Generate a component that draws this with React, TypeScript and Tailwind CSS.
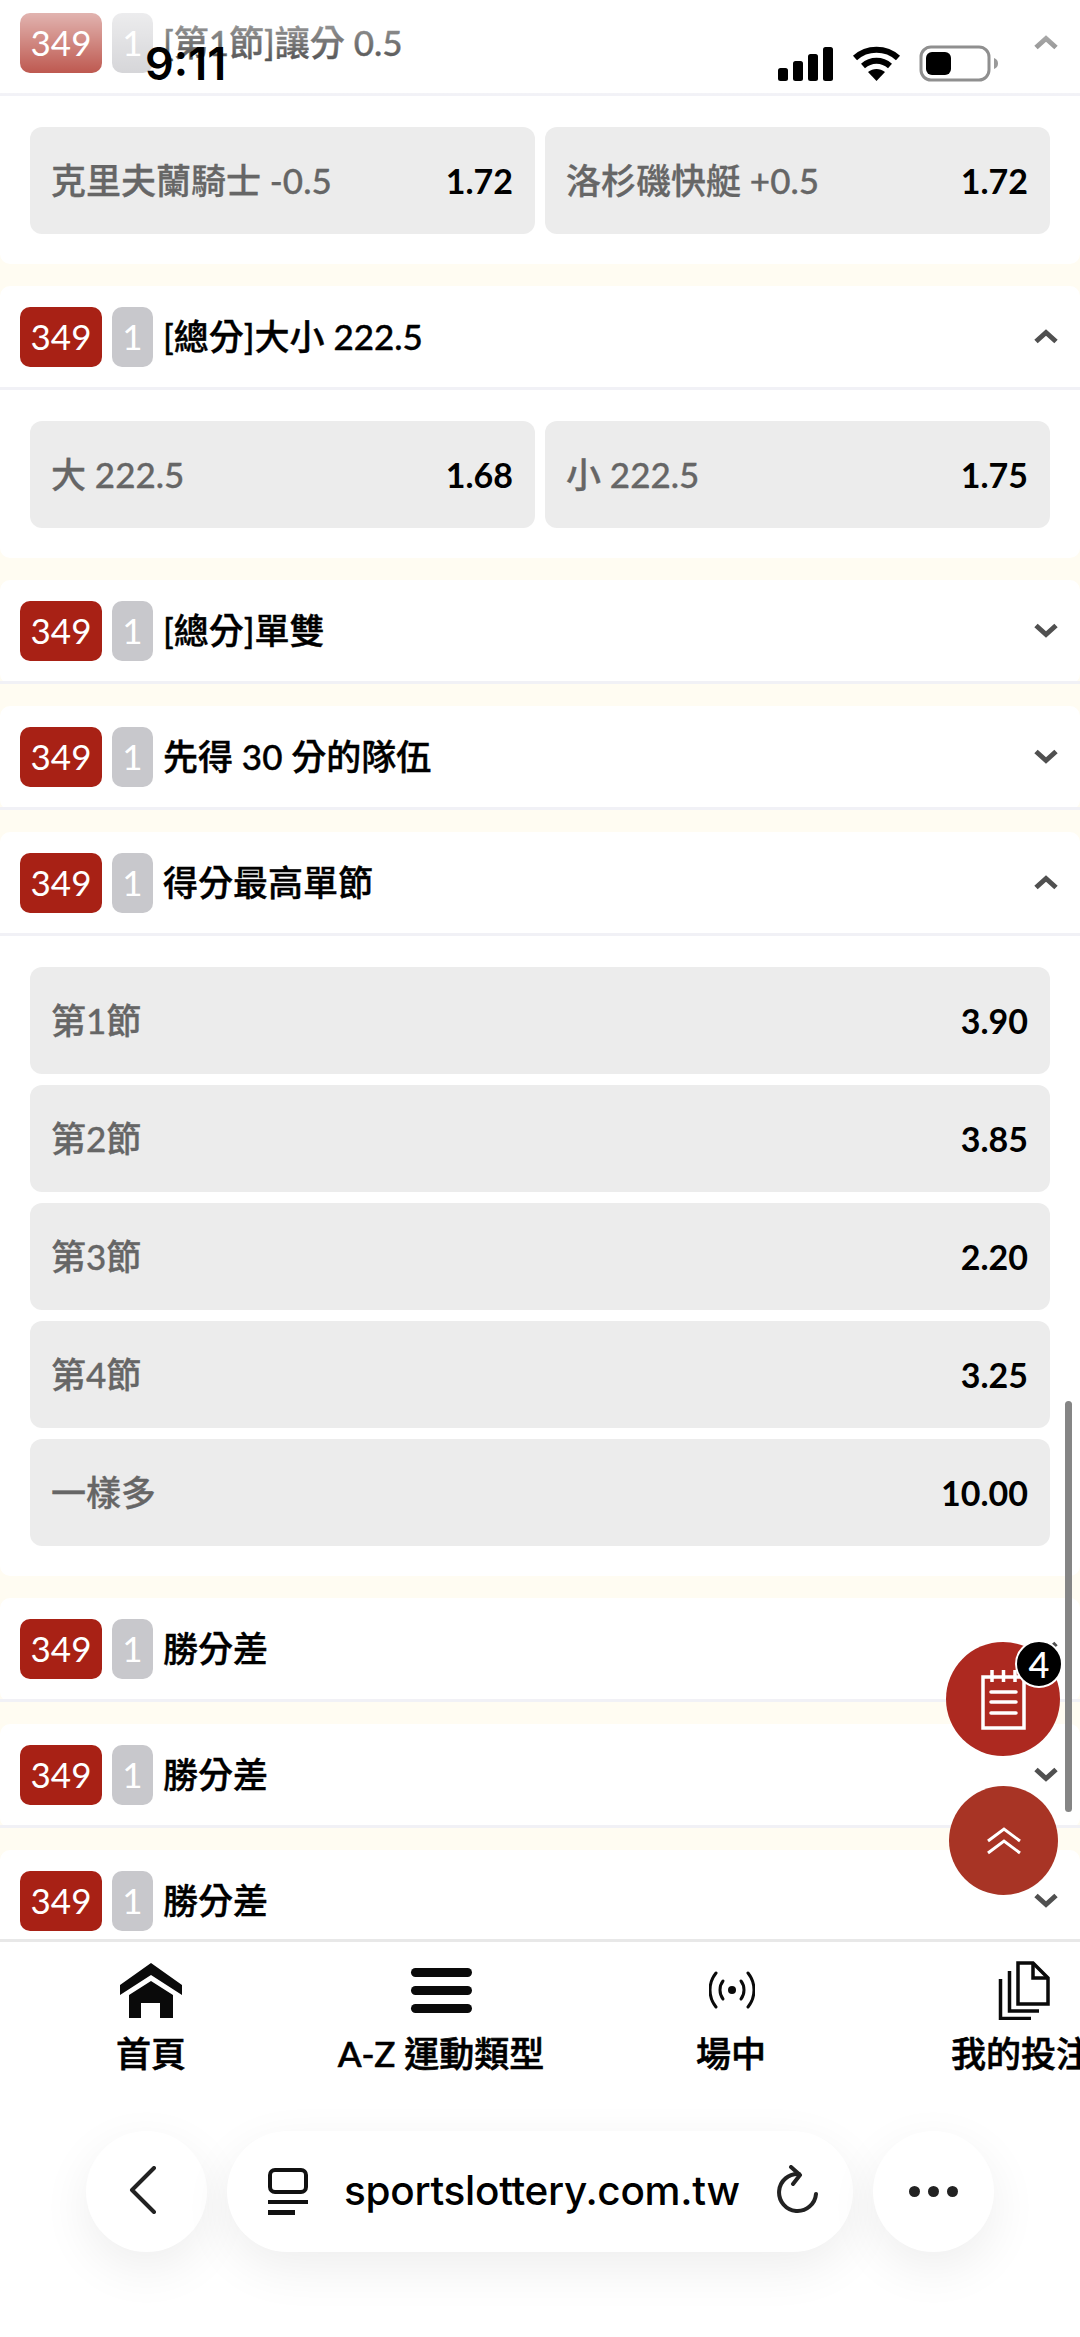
import React from 'react';

type Odd = { label: string; price: string };
type Market = { title: string; open?: boolean; cols?: 1 | 2; odds?: Odd[] };

const markets: Market[] = [
  {
    title: '[第1節]讓分 0.5',
    open: true,
    cols: 2,
    odds: [
      { label: '克里夫蘭騎士 -0.5', price: '1.72' },
      { label: '洛杉磯快艇 +0.5', price: '1.72' },
    ],
  },
  {
    title: '[總分]大小 222.5',
    open: true,
    cols: 2,
    odds: [
      { label: '大 222.5', price: '1.68' },
      { label: '小 222.5', price: '1.75' },
    ],
  },
  { title: '[總分]單雙' },
  { title: '先得 30 分的隊伍' },
  {
    title: '得分最高單節',
    open: true,
    cols: 1,
    odds: [
      { label: '第1節', price: '3.90' },
      { label: '第2節', price: '3.85' },
      { label: '第3節', price: '2.20' },
      { label: '第4節', price: '3.25' },
      { label: '一樣多', price: '10.00' },
    ],
  },
  { title: '勝分差' },
  { title: '勝分差' },
  { title: '勝分差' },
];

const Chevron = ({ up }: { up?: boolean }) => (
  <svg width="24" height="15" viewBox="0 0 24 15" fill="none" stroke="#505050" strokeWidth="5" className={up ? 'rotate-180' : ''}>
    <path d="M2 2.5 12 11.5 22 2.5" />
  </svg>
);

const MarketCard = ({ market }: { market: Market }) => (
  <section className="bg-white rounded-[10px]">
    <header className="h-[104px] flex items-center pl-[20px] pr-[22px] border-b-[3px] border-[#f1f1f6]">
      <span className="w-[82px] h-[60px] rounded-[10px] bg-[#a82115] text-white text-[35px] flex items-center justify-center">349</span>
      <span className="w-[41px] h-[60px] ml-[10px] rounded-[10px] bg-[#c8c8cc] text-white text-[35px] flex items-center justify-center">1</span>
      <h2 className="ml-[10px] text-[35px] font-medium text-black flex-1 [-webkit-text-stroke:0.4px_#000]">{market.title}</h2>
      <Chevron up={market.open} />
    </header>
    {market.open && market.odds && (
      <div className={market.cols === 2 ? 'grid grid-cols-2 gap-[10px] px-[30px] py-[30.5px]' : 'flex flex-col gap-[11px] px-[30px] pt-[31px] pb-[30px]'}>
        {market.odds.map((odd) => (
          <button key={odd.label} className="h-[107px] rounded-[12px] bg-[#ececec] flex items-center justify-between pl-[21px] pr-[22px]">
            <span className="text-[35px] font-medium text-[#666] [-webkit-text-stroke:0.3px_#666]">{odd.label}</span>
            <span className="text-[34px] font-bold text-black">{odd.price}</span>
          </button>
        ))}
      </div>
    )}
  </section>
);

const HomeIcon = () => (
  <svg width="62" height="55" viewBox="0 0 62 55" fill="#0a0a0a">
    <path d="M31 0 62 22V32L31 12 0 32V22Z" />
    <path d="M31 18 53 32V55H40V40H21V55H9V32Z" />
  </svg>
);

const MenuIcon = () => (
  <div className="w-[61px] h-[55px] flex flex-col justify-center gap-[9px]">
    <div className="h-[9px] rounded-full bg-[#0a0a0a]" />
    <div className="h-[9px] rounded-full bg-[#0a0a0a]" />
    <div className="h-[9px] rounded-full bg-[#0a0a0a]" />
  </div>
);

const LiveIcon = () => (
  <svg width="46" height="38" viewBox="0 0 46 38" fill="none" stroke="#0a0a0a" strokeWidth="3" strokeLinecap="round" className="ml-[2px]">
    <path d="M7 2C-1 12-1 26 7 36" />
    <path d="M39 2C47 12 47 26 39 36" />
    <path d="M14 10C10 15 10 23 14 28" />
    <path d="M32 10C36 15 36 23 32 28" />
    <circle cx="23" cy="19" r="4" fill="#0a0a0a" stroke="none" />
  </svg>
);

const BetsIcon = () => (
  <svg width="52" height="59" viewBox="0 0 52 59" fill="none" stroke="#0a0a0a" strokeWidth="3.5" className="ml-[6px]">
    <path d="M20 2H35L50 17V43H20Z" />
    <path d="M35 2V17H50" />
    <path d="M11.5 10V50H41" />
    <path d="M2.5 18V57.5H33" />
  </svg>
);

const NavItem = ({ icon, label }: { icon: React.ReactNode; label: string }) => (
  <div className="w-[290px] shrink-0 flex flex-col items-center">
    <div className="h-[60px] flex items-center justify-center">{icon}</div>
    <span className="mt-[12px] text-[35px] leading-[42px] font-medium text-black whitespace-nowrap [-webkit-text-stroke:0.6px_#000]">{label}</span>
  </div>
);

const StatusBar = () => (
  <div className="absolute top-0 left-0 right-0 h-[110px] bg-gradient-to-b from-white/75 to-white/0">
    <span className="absolute left-[145px] top-[37px] font-['Inter',sans-serif] text-[45px] leading-[54px] font-semibold text-black">9:11</span>
    <div className="absolute left-[778px] top-[45px] flex items-center gap-[19px]">
      <svg width="55" height="35" viewBox="0 0 55 35" fill="#000">
        <rect x="0" y="22" width="10" height="13" rx="2.5" />
        <rect x="15" y="15" width="10" height="20" rx="2.5" />
        <rect x="30" y="8" width="10" height="27" rx="2.5" />
        <rect x="45" y="1" width="10" height="34" rx="2.5" />
      </svg>
      <svg width="49" height="35" viewBox="0 0 49 35" fill="none" stroke="#000" strokeWidth="6">
        <path d="M3 12C15 1 34 1 46 12" />
        <path d="M11 20C19 13 30 13 38 20" />
        <path d="M24.5 35 16 26C21 22 28 22 33 26Z" fill="#000" stroke="none" />
      </svg>
      <svg width="80" height="37" viewBox="0 0 80 37" fill="none" className="-ml-[1px]">
        <rect x="2" y="2" width="68" height="33" rx="10" stroke="#8f8f8f" strokeWidth="3" />
        <rect x="7" y="7" width="25" height="23" rx="6" fill="#000" />
        <path d="M75 13c3 1 4 3 4 5.5s-1 4.5-4 5.5Z" fill="#9a9a9a" />
      </svg>
    </div>
  </div>
);

const BrowserBar = () => (
  <div className="flex gap-[20px] pl-[86px]">
    <button className="w-[121px] h-[121px] rounded-full bg-white flex items-center justify-center shadow-[0_16px_50px_rgba(0,0,0,0.07)]">
      <svg width="28" height="48" viewBox="0 0 28 48" fill="none" stroke="#222" strokeWidth="4" strokeLinecap="round" strokeLinejoin="round" className="-ml-[8px] -mt-[3px]">
        <path d="M25 2 3 24 25 46" />
      </svg>
    </button>
    <div className="w-[626px] h-[121px] rounded-full bg-white flex items-center pl-[41px] shadow-[0_16px_50px_rgba(0,0,0,0.07)]">
      <svg width="40" height="48" viewBox="0 0 40 48" fill="none" stroke="#111" strokeWidth="4">
        <rect x="2" y="2" width="36" height="22" rx="5" />
        <path d="M0 34H40" />
        <path d="M0 44.5H27" strokeWidth="5" />
      </svg>
      <span className="ml-[36px] font-['Inter',sans-serif] text-[40.5px] font-medium text-black whitespace-nowrap tracking-[-0.3px]">sportslottery.com.tw</span>
      <svg className="ml-[37px] -mt-[3px]" width="42" height="50" viewBox="0 0 42 50" fill="none" stroke="#222" strokeWidth="4" strokeLinecap="round" strokeLinejoin="round">
        <path d="M22 9A18.5 18.5 0 1 0 39 29" />
        <path d="M14 2 23 10 16 19" />
      </svg>
    </div>
    <button className="w-[121px] h-[121px] rounded-full bg-white flex items-center justify-center gap-[8px] shadow-[0_16px_50px_rgba(0,0,0,0.07)]">
      <span className="w-[11px] h-[11px] rounded-full bg-[#222]" />
      <span className="w-[11px] h-[11px] rounded-full bg-[#222]" />
      <span className="w-[11px] h-[11px] rounded-full bg-[#222]" />
    </button>
  </div>
);

export default function App() {
  return (
    <div className="relative w-[1080px] h-[2337px] overflow-hidden bg-white flex flex-col font-['Lato','Noto_Sans_CJK_TC',sans-serif]">
      {/* market list, scrolled a little past the top */}
      <main className="flex-1 min-h-0 overflow-hidden bg-[#fffcf2]">
        <div className="flex flex-col gap-[22px] -mt-[8px]">
          {markets.map((market, i) => (
            <MarketCard key={i} market={market} />
          ))}
        </div>
      </main>

      <div className="h-[398px] shrink-0 bg-white border-t-[3px] border-[#e8e8e8] flex flex-col">
        <nav className="flex pl-[6px] pt-[18px] overflow-hidden">
          <NavItem icon={<HomeIcon />} label="首頁" />
          <NavItem icon={<MenuIcon />} label="A-Z 運動類型" />
          <NavItem icon={<LiveIcon />} label="場中" />
          <NavItem icon={<BetsIcon />} label="我的投注" />
        </nav>
        <div className="mt-[57px]">
          <BrowserBar />
        </div>
      </div>

      <StatusBar />

      {/* scrollbar and floating buttons */}
      <div className="absolute left-[1065px] top-[1401px] w-[7px] h-[411px] rounded-full bg-[#858585]" />
      <button className="absolute left-[946px] top-[1642px] w-[114px] h-[114px] rounded-full bg-[#ad2920] flex items-center justify-center">
        <svg width="45" height="61" viewBox="0 0 45 61" fill="none" stroke="#fff" strokeWidth="3.5">
          <path d="M2 8H43V59H2Z" />
          <path d="M11 1V13M22.5 1V13M34 1V13" />
          <path d="M10 23H35M10 33H35M10 44H35" strokeLinecap="round" strokeWidth="3.5" />
        </svg>
      </button>
      <span className="absolute left-[1015px] top-[1640px] w-[48px] h-[48px] rounded-full bg-black border-2 border-white text-white text-[36px] font-medium flex items-center justify-center">4</span>
      <button className="absolute left-[949px] top-[1786px] w-[109px] h-[109px] rounded-full bg-[#a83425] flex items-center justify-center">
        <svg width="34" height="28" viewBox="0 0 34 28" fill="none" stroke="#fff" strokeWidth="3">
          <path d="M1 14 17 2 33 14" />
          <path d="M1 26 17 14 33 26" />
        </svg>
      </button>
    </div>
  );
}
